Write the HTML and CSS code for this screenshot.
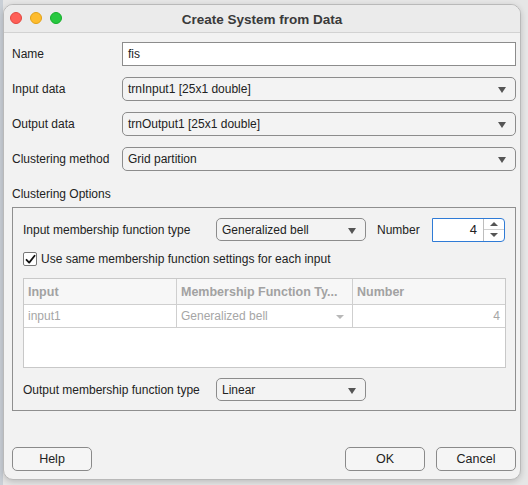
FILE: index.html
```html
<!DOCTYPE html>
<html>
<head>
<meta charset="utf-8">
<link rel="stylesheet" href="styles.css">
</head>
<body>
<div class="window">
  <div class="titlebar">
    <div class="lights">
      <span class="light red"></span>
      <span class="light yellow"></span>
      <span class="light green"></span>
    </div>
    <div class="title">Create System from Data</div>
  </div>
  <div class="content">
    <div class="row">
      <label class="lbl">Name</label>
      <div class="field text">fis</div>
    </div>
    <div class="row">
      <label class="lbl">Input data</label>
      <div class="field select">trnInput1 [25x1 double]<span class="arrow"></span></div>
    </div>
    <div class="row">
      <label class="lbl">Output data</label>
      <div class="field select">trnOutput1 [25x1 double]<span class="arrow"></span></div>
    </div>
    <div class="row">
      <label class="lbl">Clustering method</label>
      <div class="field select">Grid partition<span class="arrow"></span></div>
    </div>
    <div class="section-title">Clustering Options</div>
    <div class="group">
      <div class="grow">
        <label class="glbl">Input membership function type</label>
        <div class="field select small">Generalized bell<span class="arrow"></span></div>
        <label class="numlbl">Number</label>
        <div class="spinner">
          <div class="spin-val">4</div>
          <div class="spin-btns">
            <div class="spin-half"><span class="up"></span></div>
            <div class="spin-half"><span class="down"></span></div>
          </div>
        </div>
      </div>
      <div class="check-row">
        <span class="checkbox"><svg width="11" height="11" viewBox="0 0 11 11"><path d="M1.5 5.8 L4.2 8.6 L9.6 1.8" fill="none" stroke="#111" stroke-width="1.8" stroke-linecap="round" stroke-linejoin="round"/></svg></span>
        <span>Use same membership function settings for each input</span>
      </div>
      <div class="table">
        <div class="thead">
          <div class="c c1">Input</div>
          <div class="c c2">Membership Function Ty...</div>
          <div class="c c3">Number</div>
        </div>
        <div class="trow">
          <div class="c c1">input1</div>
          <div class="c c2">Generalized bell<span class="tarrow"></span></div>
          <div class="c c3 num">4</div>
        </div>
      </div>
      <div class="grow out">
        <label class="glbl">Output membership function type</label>
        <div class="field select small">Linear<span class="arrow"></span></div>
      </div>
    </div>
    <div class="buttons">
      <button class="btn">Help</button>
      <div class="spacer"></div>
      <button class="btn">OK</button>
      <button class="btn">Cancel</button>
    </div>
  </div>
</div>
</body>
</html>
```
FILE: styles.css
```css
* { box-sizing: border-box; }
html, body { margin: 0; padding: 0; }
body {
  width: 528px;
  height: 485px;
  background: linear-gradient(to right, #c9cfd6 0, #c9cfd6 3px, #e6e6e6 3px);
  padding: 4px 7px 5px 3px;
  font-family: "Liberation Sans", Arial, sans-serif;
  font-size: 12px;
  color: #222;
  overflow: hidden;
}
.window {
  width: 518px;
  height: 476px;
  background: #f2f2f2;
  border: 1px solid #b9b9b9;
  border-radius: 10px;
  box-shadow: 0 2px 6px rgba(0,0,0,0.18);
  display: flex;
  flex-direction: column;
  overflow: hidden;
}
.titlebar {
  height: 28px;
  flex: none;
  background: #ebebeb;
  border-bottom: 1px solid #d2d2d2;
  position: relative;
  display: flex;
  align-items: center;
  justify-content: center;
}
.lights {
  position: absolute;
  left: 6px;
  top: 7px;
  display: flex;
  gap: 8px;
}
.light {
  width: 12px;
  height: 12px;
  border-radius: 50%;
}
.red { background: #fe5f57; border: 0.5px solid #e2463f; }
.yellow { background: #febc2e; border: 0.5px solid #e1a116; }
.green { background: #28c840; border: 0.5px solid #14ae2a; }
.title {
  font-weight: bold;
  font-size: 13.5px;
  color: #3a3a3a;
  margin-top: 1px;
}
.content {
  flex: 1;
  padding: 9px 4px 0 8px;
  display: flex;
  flex-direction: column;
}
.row {
  display: flex;
  align-items: center;
  height: 24px;
  margin-bottom: 11px;
}
.lbl { width: 110px; flex: none; }
.field {
  flex: 1;
  height: 24px;
  display: flex;
  align-items: center;
  padding-left: 5px;
  position: relative;
}
.text {
  background: #fff;
  border: 1px solid #8c8c8c;
}
.select {
  background: #f3f3f3;
  border: 1px solid #8c8c8c;
  border-radius: 5px;
}
.arrow {
  position: absolute;
  right: 9px;
  top: 9px;
  width: 0;
  height: 0;
  border-left: 4px solid transparent;
  border-right: 4px solid transparent;
  border-top: 6px solid #555;
}
.section-title {
  margin-top: 4px;
  height: 21px;
  line-height: 16px;
}
.group {
  border: 1px solid #8f8f8f;
  height: 204px;
  padding: 10px 10px 0 10px;
  display: flex;
  flex-direction: column;
}
.grow {
  display: flex;
  align-items: center;
  height: 23px;
}
.glbl { width: 193px; flex: none; }
.field.small { flex: none; width: 150px; height: 23px; }
.numlbl { margin-left: 11px; width: 55px; }
.spinner {
  width: 73px;
  height: 24px;
  border: 1px solid #2f7bd6;
  border-radius: 0 4px 4px 0;
  background: #fff;
  display: flex;
}
.spin-val {
  flex: 1;
  text-align: right;
  padding-right: 6px;
  line-height: 22px;
  font-size: 13px;
}
.spin-btns {
  width: 21px;
  border-left: 1px solid #bdbdbd;
  display: flex;
  flex-direction: column;
}
.spin-half {
  flex: 1;
  display: flex;
  align-items: center;
  justify-content: center;
}
.spin-half:first-child { border-bottom: 1px solid #d0d0d0; }
.up {
  width: 0; height: 0;
  border-left: 4px solid transparent;
  border-right: 4px solid transparent;
  border-bottom: 4px solid #555;
}
.down {
  width: 0; height: 0;
  border-left: 4px solid transparent;
  border-right: 4px solid transparent;
  border-top: 4px solid #555;
}
.check-row {
  display: flex;
  align-items: center;
  gap: 4px;
  margin-top: 11px;
  height: 14px;
}
.checkbox {
  width: 14px;
  height: 14px;
  background: #fff;
  border: 1px solid #777;
  border-radius: 2px;
  display: flex;
  align-items: center;
  justify-content: center;
}
.table {
  margin-top: 12px;
  width: 483px;
  height: 90px;
  background: #fff;
  border: 1px solid #c8c8c8;
  color: #a6a6a6;
}
.thead, .trow {
  display: flex;
  border-bottom: 1px solid #cfcfcf;
}
.thead { height: 26px; font-weight: bold; font-size: 12.5px; color: #a2a2a2; background: #f7f7f7; }
.trow { height: 23px; }
.c {
  display: flex;
  align-items: center;
  padding-left: 4px;
  position: relative;
}
.c1 { width: 153px; border-right: 1px solid #cfcfcf; }
.c2 { width: 176px; border-right: 1px solid #cfcfcf; }
.c3 { flex: 1; }
.num { justify-content: flex-end; padding-right: 5px; }
.tarrow {
  position: absolute;
  right: 8px;
  top: 10px;
  border-left: 4px solid transparent;
  border-right: 4px solid transparent;
  border-top: 4px solid #b8b8b8;
}
.grow.out { margin-top: 10px; }
.buttons {
  display: flex;
  margin-top: 36px;
  gap: 11px;
}
.spacer { flex: 1; }
.btn {
  width: 80px;
  height: 24px;
  background: #f5f5f5;
  border: 1px solid #8a8a8a;
  border-radius: 5px;
  font-family: "Liberation Sans", Arial, sans-serif;
  font-size: 12.5px;
  color: #222;
  padding: 0;
}
```
